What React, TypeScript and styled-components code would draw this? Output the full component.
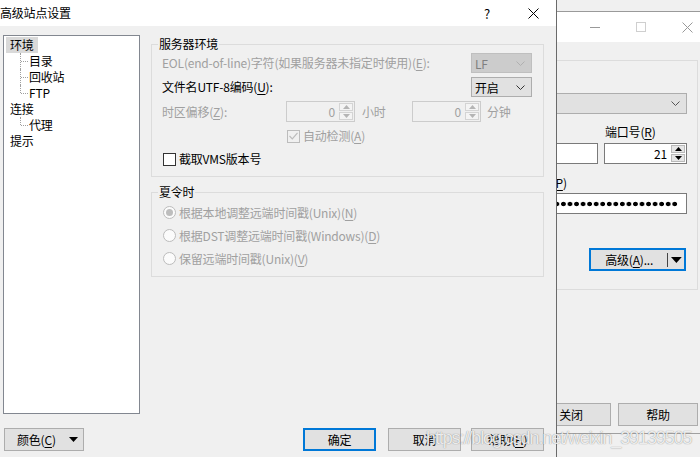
import React from 'react';
import styled, { createGlobalStyle } from 'styled-components';

const GlobalStyle = createGlobalStyle`
  html, body {
    margin: 0;
    padding: 0;
  }
  body {
    background: #f0f0f0;
    font-family: "Microsoft YaHei UI", "Noto Sans CJK SC", sans-serif;
    font-size: 12px;
    letter-spacing: -0.2px;
    color: #000;
    overflow: hidden;
  }
  u {
    text-underline-offset: 2px;
  }
`;

const Desktop = styled.div`
  position: relative;
  width: 700px;
  height: 457px;
  overflow: hidden;
  background: #f0f0f0;
`;

// windows sit on the desktop at their own coordinates
const Window = styled.div<{ $left: number; $top: number; $width: number; $height: number; $front?: boolean }>`
  position: absolute;
  left: ${p => p.$left}px;
  top: ${p => p.$top}px;
  width: ${p => p.$width}px;
  height: ${p => p.$height}px;
  box-sizing: border-box;
  display: flex;
  flex-direction: column;
  background: #f0f0f0;
  border-top: ${p => (p.$front ? 'none' : '1px solid #9a9a9a')};
  border-right: ${p => (p.$front ? '1px solid #6a6a6a' : 'none')};
  border-left: ${p => (p.$front ? 'none' : '1px solid #9a9a9a')};
`;

const TitleBar = styled.div<{ $height: number }>`
  flex: none;
  height: ${p => p.$height}px;
  background: #fff;
  display: flex;
  align-items: center;
`;

const Caption = styled.div`
  flex: 1;
  line-height: 16px;
  white-space: nowrap;
`;

const CaptionButton = styled.div<{ $color?: string }>`
  width: 46px;
  height: 100%;
  display: flex;
  align-items: center;
  justify-content: center;
  color: ${p => p.$color || '#000'};
  font-size: 13px;
`;

const Cross = ({ color }: { color: string }) => (
  <svg width="11" height="11" viewBox="0 0 11 11">
    <path d="M0.5 0.5 L10.5 10.5 M10.5 0.5 L0.5 10.5" stroke={color} strokeWidth="1" fill="none" />
  </svg>
);

const MinGlyph = () => (
  <svg width="10" height="10" viewBox="0 0 10 10">
    <path d="M0 5.5 H10" stroke="#999" strokeWidth="1" />
  </svg>
);

const MaxGlyph = () => (
  <svg width="10" height="10" viewBox="0 0 10 10">
    <rect x="0.5" y="0.5" width="9" height="9" stroke="#cfcfcf" fill="none" />
  </svg>
);

/* ---------- front dialog ---------- */

const FrontBody = styled.div`
  flex: 1;
  display: flex;
  flex-direction: column;
`;

const MainRow = styled.div`
  display: flex;
  gap: 11px;
  padding: 9px 0 0 3px;
`;

const Tree = styled.div`
  width: 137px;
  height: 379px;
  box-sizing: border-box;
  border: 1px solid #828790;
  background: #fff;
  padding-top: 1px;
`;

const TreeRow = styled.div`
  height: 16px;
  display: flex;
  align-items: center;
  padding-left: 2px;
`;

const TreeLabel = styled.span<{ $selected?: boolean; $child?: boolean }>`
  height: 16px;
  line-height: 16px;
  padding: ${p => (p.$child ? '0 4px 0 1px' : '0 4px')};
  background: ${p => (p.$selected ? '#d9d9d9' : 'transparent')};
`;

const Connector = styled.span<{ $last?: boolean }>`
  position: relative;
  flex: none;
  width: 8px;
  height: 16px;
  margin-left: 14px;

  &::before {
    content: '';
    position: absolute;
    left: 0;
    top: 0;
    height: ${p => (p.$last ? '8px' : '16px')};
    border-left: 1px dotted #a0a0a0;
  }
  &::after {
    content: '';
    position: absolute;
    left: 1px;
    top: 8px;
    width: 7px;
    border-top: 1px dotted #a0a0a0;
  }
`;

const treeItems = [
  { label: '环境', child: false, selected: true },
  { label: '目录', child: true },
  { label: '回收站', child: true },
  { label: 'FTP', child: true, last: true },
  { label: '连接', child: false },
  { label: '代理', child: true, last: true },
  { label: '提示', child: false },
];

const Pane = styled.div`
  width: 393px;
  margin-top: 1px;
  display: flex;
  flex-direction: column;
`;

const Group = styled.fieldset<{ $mt?: number; $pb: number }>`
  margin: ${p => p.$mt || 0}px 0 0 0;
  padding: 0 10px ${p => p.$pb}px 10px;
  border: 1px solid #dcdcdc;
  min-width: 0;
`;

const Legend = styled.legend`
  padding: 0 1px;
  margin-left: -4px;
  line-height: 16px;
  height: 16px;
`;

const Row = styled.div<{ $h: number; $mt?: number; $indent?: number; $gap?: number }>`
  display: flex;
  align-items: center;
  height: ${p => p.$h}px;
  margin-top: ${p => p.$mt || 0}px;
  padding-left: ${p => p.$indent || 0}px;
  gap: ${p => p.$gap || 0}px;
  white-space: nowrap;
`;

const Label = styled.span<{ $disabled?: boolean; $w?: number; $pl?: number }>`
  box-sizing: border-box;
  color: ${p => (p.$disabled ? '#a0a0a0' : '#000')};
  ${p => (p.$w ? `width: ${p.$w}px; flex: none;` : 'flex: 1;')}
  padding-left: ${p => p.$pl || 0}px;
  line-height: 16px;
`;

const Combo = styled.div<{ $disabled?: boolean; $w?: number }>`
  ${p => (p.$w ? `width: ${p.$w}px; flex: none;` : 'flex: 1;')}
  height: 100%;
  box-sizing: border-box;
  border: 1px solid ${p => (p.$disabled ? '#bfbfbf' : '#adadad')};
  background: ${p => (p.$disabled ? '#cccccc' : '#e1e1e1')};
  color: ${p => (p.$disabled ? '#7f7f7f' : '#000')};
  display: flex;
  align-items: center;
  padding: 0 6px 0 3px;
`;

const ComboText = styled.span`
  flex: 1;
`;

const Chevron = ({ color }: { color: string }) => (
  <svg width="9" height="5" viewBox="0 0 9 5">
    <polyline points="0.5,0.5 4.5,4.5 8.5,0.5" stroke={color} fill="none" strokeWidth="1" />
  </svg>
);

const SpinBox = styled.div<{ $w: number; $disabled?: boolean }>`
  width: ${p => p.$w}px;
  flex: none;
  height: 100%;
  box-sizing: border-box;
  border: 1px solid ${p => (p.$disabled ? '#cccccc' : '#7a7a7a')};
  background: ${p => (p.$disabled ? '#f0f0f0' : '#fff')};
  color: ${p => (p.$disabled ? '#a0a0a0' : '#000')};
  display: flex;
  align-items: center;
  padding-right: 1px;
`;

const SpinValue = styled.span`
  flex: 1;
  text-align: right;
  padding-right: 4px;
`;

const SpinButtons = styled.div`
  width: 14px;
  height: 17px;
  display: flex;
  flex-direction: column;
  gap: 1px;
`;

const SpinHalf = styled.div<{ $disabled?: boolean }>`
  flex: 1;
  box-sizing: border-box;
  border: 1px solid ${p => (p.$disabled ? '#d4d4d4' : '#b9b9b9')};
  background: ${p => (p.$disabled ? '#f4f4f4' : '#e6e6e6')};
  display: flex;
  align-items: center;
  justify-content: center;
`;

const Arrow = ({ up, color }: { up?: boolean; color: string }) => (
  <svg width="7" height="4" viewBox="0 0 7 4">
    <polygon points={up ? '0,4 7,4 3.5,0' : '0,0 7,0 3.5,4'} fill={color} />
  </svg>
);

const Spinner = ({ w, value, disabled }: { w: number; value: string; disabled?: boolean }) => (
  <SpinBox $w={w} $disabled={disabled}>
    <SpinValue>{value}</SpinValue>
    <SpinButtons>
      <SpinHalf $disabled={disabled}><Arrow up color={disabled ? '#b5b5b5' : '#000'} /></SpinHalf>
      <SpinHalf $disabled={disabled}><Arrow color={disabled ? '#b5b5b5' : '#000'} /></SpinHalf>
    </SpinButtons>
  </SpinBox>
);

const CheckBox = styled.span<{ $disabled?: boolean }>`
  flex: none;
  width: 13px;
  height: 13px;
  box-sizing: border-box;
  border: 1px solid ${p => (p.$disabled ? '#bcbcbc' : '#333')};
  background: ${p => (p.$disabled ? '#f0f0f0' : '#fff')};
  display: flex;
  align-items: center;
  justify-content: center;
  margin-right: 3px;
`;

const Tick = () => (
  <svg width="9" height="8" viewBox="0 0 9 8">
    <polyline points="0.5,4 3.3,6.8 8.5,0.8" stroke="#bcbcbc" strokeWidth="1.2" fill="none" />
  </svg>
);

const RadioCircle = styled.span`
  flex: none;
  width: 13px;
  height: 13px;
  box-sizing: border-box;
  border-radius: 50%;
  border: 1px solid #bcbcbc;
  background: #fbfbfb;
  display: flex;
  align-items: center;
  justify-content: center;
  margin: 0 3px 0 1px;
`;

const RadioDot = styled.span`
  width: 7px;
  height: 7px;
  border-radius: 50%;
  background: #bdbdbd;
`;

const Footer = styled.div`
  display: flex;
  align-items: center;
  height: 23px;
  margin-top: 14px;
  padding: 0 12px 0 4px;
`;

const ButtonGroup = styled.div`
  margin-left: auto;
  display: flex;
`;

const PushButton = styled.div<{ $w: number; $default?: boolean; $ml?: number }>`
  width: ${p => p.$w}px;
  height: 23px;
  box-sizing: border-box;
  margin-left: ${p => p.$ml || 0}px;
  border: ${p => (p.$default ? '2px solid #0078d7' : '1px solid #adadad')};
  background: #e1e1e1;
  display: flex;
  align-items: center;
  justify-content: center;
  white-space: nowrap;
`;

const MenuButton = styled(PushButton)`
  justify-content: flex-start;
  padding: 0 5px 0 12px;
`;

const MenuArrow = ({ w = 9, h = 5 }: { w?: number; h?: number }) => (
  <svg width={w} height={h} viewBox={`0 0 ${w} ${h}`} style={{ marginLeft: 'auto' }}>
    <polygon points={`0,0 ${w},0 ${w / 2},${h}`} fill="#000" />
  </svg>
);

/* ---------- dialog behind ---------- */

const BackBody = styled.div`
  flex: 1;
  display: flex;
  flex-direction: column;
  padding: 18px 12px 0 8px;
`;

const BackGroup = styled.div`
  height: 230px;
  box-sizing: border-box;
  border: 1px solid #dcdcdc;
  padding: 0 10px;
`;

const TextField = styled.div<{ $w?: number }>`
  ${p => (p.$w ? `width: ${p.$w}px; flex: none;` : 'flex: 1;')}
  height: 100%;
  box-sizing: border-box;
  border: 1px solid #7a7a7a;
  background: #fff;
  display: flex;
  align-items: center;
`;

const Dots = styled.span`
  flex: 1;
  height: 6px;
  margin: 0 8px 0 4px;
  background: radial-gradient(circle, #000 0 2px, transparent 2.6px) right center / 6.55px 6px repeat-x;
`;

const Spacer = styled.span`
  flex: 1;
`;

const SplitButton = styled(PushButton)`
  justify-content: flex-start;
  padding: 0 2px 0 0;
  margin-right: 1px;
`;

const SplitMain = styled.span`
  width: 78px;
  text-align: center;
`;

const SplitDivider = styled.span`
  width: 1px;
  height: 14px;
  background: #444;
  margin-right: 3px;
`;

const BackFooter = styled.div`
  display: flex;
  justify-content: flex-end;
  gap: 7px;
  margin-top: 113px;
  height: 23px;
`;

const StatusLine = styled.div`
  margin: 7px -12px 0 -8px;
  border-top: 1px solid #a0a0a0;
`;

const Watermark = styled.div`
  position: absolute;
  left: 426px;
  top: 428px;
  font-family: "Liberation Sans", Arial, sans-serif;
  font-size: 18px;
  letter-spacing: -1.1px;
  color: rgba(255, 255, 255, 0.85);
  text-shadow: 0 0 1px rgba(70, 70, 70, 0.7);
  white-space: nowrap;
  pointer-events: none;
`;

const App = () => {
  return (
    <>
      <GlobalStyle />
      <Desktop>
        <Window $left={250} $top={11} $width={460} $height={460}>
          <TitleBar $height={30}>
            <Caption>登录</Caption>
            <CaptionButton><MinGlyph /></CaptionButton>
            <CaptionButton><MaxGlyph /></CaptionButton>
            <CaptionButton><Cross color="#999" /></CaptionButton>
          </TitleBar>
          <BackBody>
            <BackGroup>
              <Row $h={21} $mt={32}>
                <Combo><ComboText>FTP</ComboText><Chevron color="#555" /></Combo>
              </Row>
              <Row $h={16} $mt={10}>
                <Label>主机名(<u>H</u>)</Label>
                <Label $w={83} $pl={1}>端口号(<u>R</u>)</Label>
              </Row>
              <Row $h={21} $mt={3} $gap={6}>
                <TextField />
                <Spinner w={83} value="21" />
              </Row>
              <Row $h={16} $mt={11}>
                <Label>用户名(<u>U</u>)</Label>
                <Label $w={165} $pl={6}>密码(<u>P</u>)</Label>
              </Row>
              <Row $h={21} $mt={2} $gap={6}>
                <TextField />
                <TextField $w={165}><Dots /></TextField>
              </Row>
              <Row $h={23} $mt={34}>
                <Spacer />
                <SplitButton $w={97} $default>
                  <SplitMain>高级(<u>A</u>)...</SplitMain>
                  <SplitDivider />
                  <MenuArrow w={11} h={6} />
                </SplitButton>
              </Row>
            </BackGroup>
            <BackFooter>
              <PushButton $w={80}>关闭</PushButton>
              <PushButton $w={80}>帮助</PushButton>
            </BackFooter>
            <StatusLine />
          </BackBody>
        </Window>

        <Window $left={0} $top={0} $width={557} $height={470} $front>
          <TitleBar $height={26}>
            <Caption>高级站点设置</Caption>
            <CaptionButton>?</CaptionButton>
            <CaptionButton><Cross color="#000" /></CaptionButton>
          </TitleBar>
          <FrontBody>
            <MainRow>
              <Tree>
                {treeItems.map(item => (
                  <TreeRow key={item.label}>
                    {item.child && <Connector $last={item.last} />}
                    <TreeLabel $selected={item.selected} $child={item.child}>{item.label}</TreeLabel>
                  </TreeRow>
                ))}
              </Tree>
              <Pane>
                <Group $pb={9}>
                  <Legend>服务器环境</Legend>
                  <Row $h={20} $mt={1}>
                    <Label $disabled>EOL(end-of-line)字符(如果服务器未指定时使用)(<u>E</u>):</Label>
                    <Combo $w={61} $disabled><ComboText>LF</ComboText><Chevron color="#b0b0b0" /></Combo>
                    <span style={{ width: 1 }} />
                  </Row>
                  <Row $h={20} $mt={4}>
                    <Label>文件名UTF-8编码(<u>U</u>):</Label>
                    <Combo $w={61}><ComboText>开启</ComboText><Chevron color="#333" /></Combo>
                    <span style={{ width: 1 }} />
                  </Row>
                  <Row $h={21} $mt={4}>
                    <Label $disabled $w={124}>时区偏移(<u>Z</u>):</Label>
                    <Spinner w={69} value="0" disabled />
                    <Label $disabled $w={57} $pl={7}>小时</Label>
                    <Spinner w={69} value="0" disabled />
                    <Label $disabled $pl={6}>分钟</Label>
                  </Row>
                  <Row $h={16} $mt={6} $indent={125}>
                    <CheckBox $disabled><Tick /></CheckBox>
                    <Label $disabled>自动检测(<u>A</u>)</Label>
                  </Row>
                  <Row $h={16} $mt={7} $indent={1}>
                    <CheckBox />
                    <Label>截取VMS版本号</Label>
                  </Row>
                </Group>
                <Group $mt={7} $pb={6}>
                  <Legend>夏令时</Legend>
                  <Row $h={23} $mt={1}>
                    <RadioCircle><RadioDot /></RadioCircle>
                    <Label $disabled>根据本地调整远端时间戳(Unix)(<u>N</u>)</Label>
                  </Row>
                  <Row $h={23}>
                    <RadioCircle />
                    <Label $disabled>根据DST调整远端时间戳(Windows)(<u>D</u>)</Label>
                  </Row>
                  <Row $h={23}>
                    <RadioCircle />
                    <Label $disabled>保留远端时间戳(Unix)(<u>V</u>)</Label>
                  </Row>
                </Group>
              </Pane>
            </MainRow>
            <Footer>
              <MenuButton $w={80}>
                颜色(<u>C</u>)
                <MenuArrow />
              </MenuButton>
              <ButtonGroup>
                <PushButton $w={73} $default>确定</PushButton>
                <PushButton $w={73} $ml={12}>取消</PushButton>
                <PushButton $w={73} $ml={10}>帮助(<u>H</u>)</PushButton>
              </ButtonGroup>
            </Footer>
          </FrontBody>
        </Window>

        <Watermark>https://blog.csdn.net/weixin_39139505</Watermark>
      </Desktop>
    </>
  );
};

export default App;
